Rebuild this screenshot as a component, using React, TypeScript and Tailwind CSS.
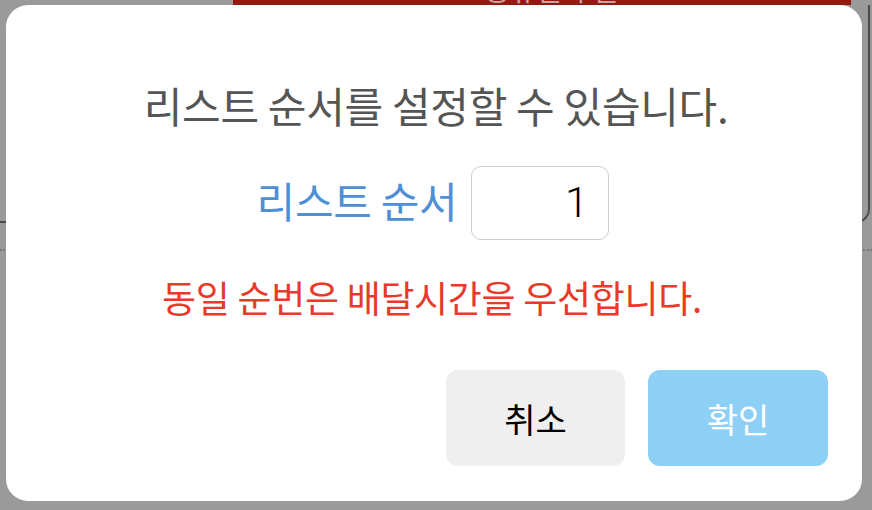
import React from "react";

const font = { fontFamily: '"Noto Sans CJK KR", "Noto Sans", sans-serif' };

function BackPage() {
  // the dimmed page lying under the dialog
  return (
    <div className="absolute inset-0 bg-[#9a9a9a]">
      <div className="ml-[233px] mr-[21px] h-[5px] overflow-hidden bg-[#921a12]">
        <div className="flex h-[5px] justify-center pl-[20px]">
          <span className="-mt-[26px] text-[28px] leading-[30px] text-[#c8a4a1]">공유일 추문</span>
        </div>
      </div>
      <div className="-ml-[20px] mr-[2px] h-[218px] rounded-b-[14px] border-2 border-t-0 border-[#4b4b4b]" />
      <div className="mt-[26px] border-t-2 border-dotted border-[#7a7a7a]" />
    </div>
  );
}

export default function App() {
  return (
    <div className="relative h-[510px] w-[872px] overflow-hidden" style={font}>
      <BackPage />
      <div className="absolute left-[6px] top-[5px] flex h-[496px] w-[856px] flex-col items-center rounded-[22px] bg-white">
        <div className="mt-[77px] flex h-[44px] items-center pl-[4px] text-[42px] tracking-[-0.3px] text-[#555555]">
          리스트 순서를 설정할 수 있습니다.
        </div>
        <div className="mt-[40px] flex items-center gap-[14px] pr-[2px]">
          <span className="pb-[8px] text-[42px] tracking-[-0.3px] text-[#4f8fd6]">리스트 순서</span>
          <div className="flex h-[74px] w-[138px] items-center justify-end rounded-[10px] border border-[#cfcfcf] pb-[2px] pr-[20px] font-[Roboto] text-[42px] font-light text-black">
            1
          </div>
        </div>
        <div className="mt-[38px] flex h-[40px] items-center pr-[4px] text-[37px] tracking-[-0.3px] text-[#e8392a]">
          동일 순번은 배달시간을 우선합니다.
        </div>
        <div className="mt-[52px] flex w-full justify-end gap-[23px] pr-[34px]">
          <button className="flex h-[96px] w-[179px] items-center justify-center rounded-[12px] bg-[#efefef] text-[34px] text-black">
            취소
          </button>
          <button className="flex h-[96px] w-[180px] items-center justify-center rounded-[12px] bg-[#8ecff5] text-[34px] text-white">
            확인
          </button>
        </div>
      </div>
    </div>
  );
}
